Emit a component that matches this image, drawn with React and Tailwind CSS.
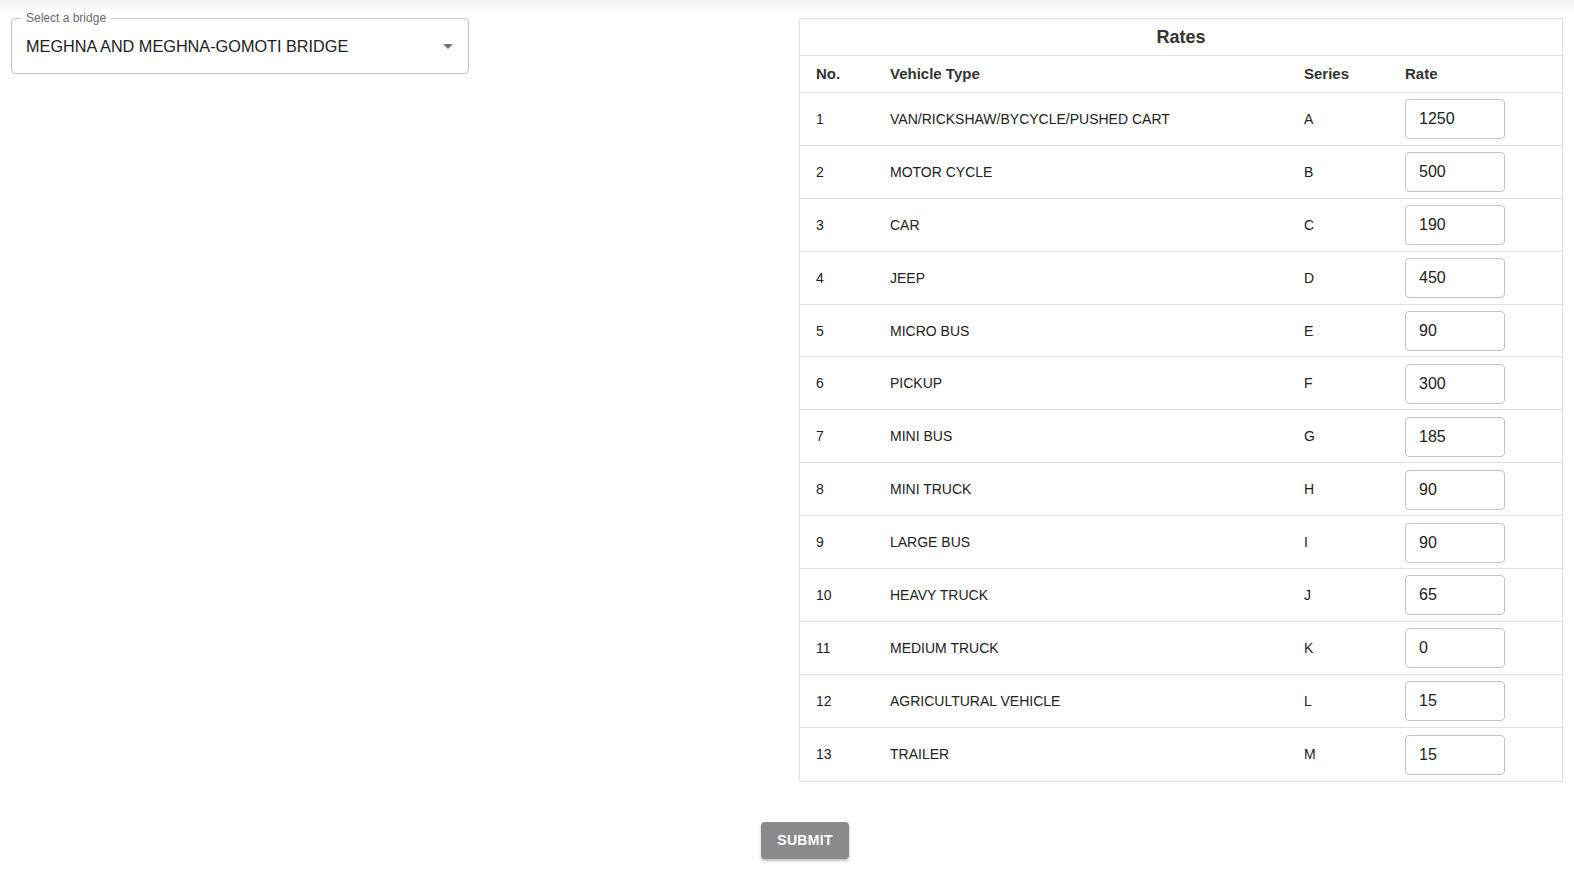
import React from 'react';

const RATES = [
  { no: 1, type: 'VAN/RICKSHAW/BYCYCLE/PUSHED CART', series: 'A', rate: '1250' },
  { no: 2, type: 'MOTOR CYCLE', series: 'B', rate: '500' },
  { no: 3, type: 'CAR', series: 'C', rate: '190' },
  { no: 4, type: 'JEEP', series: 'D', rate: '450' },
  { no: 5, type: 'MICRO BUS', series: 'E', rate: '90' },
  { no: 6, type: 'PICKUP', series: 'F', rate: '300' },
  { no: 7, type: 'MINI BUS', series: 'G', rate: '185' },
  { no: 8, type: 'MINI TRUCK', series: 'H', rate: '90' },
  { no: 9, type: 'LARGE BUS', series: 'I', rate: '90' },
  { no: 10, type: 'HEAVY TRUCK', series: 'J', rate: '65' },
  { no: 11, type: 'MEDIUM TRUCK', series: 'K', rate: '0' },
  { no: 12, type: 'AGRICULTURAL VEHICLE', series: 'L', rate: '15' },
  { no: 13, type: 'TRAILER', series: 'M', rate: '15' },
];

const cols = 'grid grid-cols-[74px_414px_101px_1fr] items-center';

const App = () => {
  return (
    <div className="h-screen w-full overflow-hidden bg-white relative font-['Liberation_Sans',Arial,sans-serif] text-[#222]">
      {/* faint app bar shadow */}
      <div className="absolute top-0 left-0 w-full h-[14px] bg-gradient-to-b from-[#f3f3f3] to-white pointer-events-none"></div>

      <div className="relative flex pt-[18px]">
        {/* --- Select --- */}
        <div className="flex-1 pl-[11px]">
          <div className="relative w-[458px] h-[56px] border border-[#c4c4c4] rounded-[4px] flex items-center pl-[14px] pr-[15px] pt-[1px]">
            <span className="absolute -top-[8px] left-[9px] bg-white px-[5px] text-[12px] leading-[14px] text-[#6b6b6b]">
              Select a bridge
            </span>
            <span className="flex-1 text-[16.25px] text-[#222]">MEGHNA AND MEGHNA-GOMOTI BRIDGE</span>
            <svg width="10" height="5" viewBox="0 0 10 5">
              <path d="M0 0 L10 0 L5 5 Z" fill="#757575" />
            </svg>
          </div>
        </div>

        {/* --- Rates table --- */}
        <div className="w-[764px] mr-[11px] border border-[#e0e0e0]">
          <div className="h-[37px] flex items-center justify-center border-b border-[#e0e0e0] text-[18px] font-bold text-[#333]">
            Rates
          </div>
          <div className={`${cols} h-[37px] border-b border-[#e0e0e0] text-[15px] font-bold text-[#333]`}>
            <div className="pl-4">No.</div>
            <div className="pl-4">Vehicle Type</div>
            <div className="pl-4">Series</div>
            <div className="pl-4">Rate</div>
          </div>
          {RATES.map((r, i) => (
            <div
              key={r.no}
              className={`${cols} h-[52.9px] pt-[1px] text-[14px] ${i < RATES.length - 1 ? 'border-b border-[#e0e0e0]' : ''}`}
            >
              <div className="pl-4">{r.no}</div>
              <div className="pl-4">{r.type}</div>
              <div className="pl-4">{r.series}</div>
              <div className="pl-4">
                <div className="w-[100px] h-[40px] border border-[#c4c4c4] rounded-[4px] flex items-center pl-[13px] text-[16px] text-[#222]">
                  {r.rate}
                </div>
              </div>
            </div>
          ))}
        </div>
      </div>

      {/* --- Submit --- */}
      <div className="flex pl-[761px] pt-[40px]">
        <button className="w-[88px] h-[37px] rounded-[4px] bg-[#8a8a8a] text-white text-[14px] font-bold tracking-[0.3px] shadow-[0_2px_3px_rgba(0,0,0,0.25)]">
          SUBMIT
        </button>
      </div>
    </div>
  );
};

export default App;
